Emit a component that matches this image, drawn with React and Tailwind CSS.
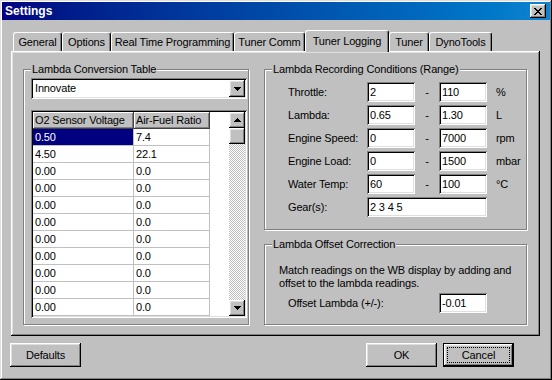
const raised =
  "shadow-[inset_-1px_-1px_#000,inset_1px_1px_#fff,inset_-2px_-2px_#808080,inset_2px_2px_#dfdfdf]";
const sunken =
  "shadow-[inset_1px_1px_#808080,inset_-1px_-1px_#fff,inset_2px_2px_#000,inset_-2px_-2px_#dfdfdf]";
const etched = "border border-[#808080] shadow-[inset_1px_1px_#fff,1px_1px_#fff]";

const tabs = [
  { label: "General", w: "w-[49px]" },
  { label: "Options", w: "w-[49px]" },
  { label: "Real Time Programming", w: "w-[123px]" },
  { label: "Tuner Comm", w: "w-[71px]" },
  { label: "Tuner Logging", w: "w-[84px]", active: true },
  { label: "Tuner", w: "w-[40px]" },
  { label: "DynoTools", w: "w-[63px]" },
];

const rows = [
  ["0.50", "7.4"],
  ["4.50", "22.1"],
  ...Array.from({ length: 9 }, () => ["0.00", "0.0"]),
];

const ranges = [
  { label: "Throttle:", min: "2", max: "110", unit: "%" },
  { label: "Lambda:", min: "0.65", max: "1.30", unit: "L" },
  { label: "Engine Speed:", min: "0", max: "7000", unit: "rpm" },
  { label: "Engine Load:", min: "0", max: "1500", unit: "mbar" },
  { label: "Water Temp:", min: "60", max: "100", unit: "°C" },
];

function Arrow({ up }) {
  return (
    <svg width="7" height="4" viewBox="0 0 7 4" shapeRendering="crispEdges" className={up ? "rotate-180" : ""}>
      <path d="M0 0H7V1H6V2H5V3H4V4H3V3H2V2H1V1H0Z" fill="#000" />
    </svg>
  );
}

function Field({ value, className = "" }) {
  return (
    <div className={`flex h-[20px] items-center bg-white pl-[3px] ${sunken} ${className}`}>
      {value}
    </div>
  );
}

function Group({ label, className = "", children }) {
  return (
    <div className={`relative ${etched} ${className}`}>
      <span className="absolute left-[7px] top-[-7px] bg-[#c0c0c0] px-[1px] leading-[13px]">
        {label}
      </span>
      {children}
    </div>
  );
}

function Button({ children, isDefault }) {
  if (isDefault) {
    return (
      <div className="h-[24px] w-[71px] border border-black">
        <div className={`h-full w-full p-[3px] ${raised}`}>
          <div className="flex h-full w-full items-center justify-center border border-dotted border-black">
            {children}
          </div>
        </div>
      </div>
    );
  }
  return (
    <div className={`flex h-[24px] w-[71px] items-center justify-center ${raised}`}>
      {children}
    </div>
  );
}

export default function App() {
  return (
    <div
      className={`flex h-[380px] w-[552px] flex-col bg-[#c0c0c0] p-[2px] font-['Liberation_Sans',Arial,sans-serif] text-[11px] leading-[13px] tracking-[-0.15px] text-black shadow-[inset_-1px_-1px_#000,inset_1px_1px_#dfdfdf,inset_-2px_-2px_#808080,inset_2px_2px_#fff]`}
    >
      {/* title bar */}
      <div className="flex h-[18px] items-center bg-linear-to-r from-[#000080] to-[#1084d0] pl-[3px] pr-[4px]">
        <span className="text-[12px] font-bold tracking-normal text-white">Settings</span>
        <div className={`ml-auto flex h-[14px] w-[16px] items-center justify-center bg-[#c0c0c0] ${raised}`}>
          <svg width="8" height="7" viewBox="0 0 8 7" shapeRendering="crispEdges">
            <path
              d="M0 0H2V1H3V2H5V1H6V0H8V1H7V2H6V3H5V4H6V5H7V6H8V7H6V6H5V5H3V6H2V7H0V6H1V5H2V4H3V3H2V2H1V1H0Z"
              fill="#000"
            />
          </svg>
        </div>
      </div>

      {/* tabs + panel */}
      <div className="ml-[9px] mt-[10px] w-[529px]">
        <div className="relative z-10 flex h-[21px] items-end pl-[2px]">
          {tabs.map((t) => (
            <div
              key={t.label}
              className={`${t.w} flex items-center justify-center rounded-t-[3px] border-l border-r border-t border-l-white border-r-black border-t-white bg-[#c0c0c0] shadow-[inset_-1px_0_#808080] ${
                t.active ? "-mb-px h-[22px]" : "h-[19px]"
              }`}
            >
              {t.label}
            </div>
          ))}
        </div>

        <div className={`flex h-[285px] gap-[15px] pl-[12px] pt-[18px] ${raised}`}>
          {/* lambda conversion table */}
          <Group label="Lambda Conversion Table" className="h-[256px] w-[226px] shrink-0">
            <div className="pl-[7px] pt-[8px]">
              <div className={`flex h-[21px] w-[216px] items-center bg-white p-[2px] ${sunken}`}>
                <span className="pl-[2px]">Innovate</span>
                <div className={`ml-auto flex h-[17px] w-[16px] items-center justify-center bg-[#c0c0c0] ${raised}`}>
                  <Arrow />
                </div>
              </div>

              <div className={`mt-[11px] flex h-[208px] w-[216px] bg-white p-[2px] ${sunken}`}>
                <div className="h-full w-[196px] overflow-hidden">
                  <div className="flex h-[17px]">
                    <div className="flex w-[101px] items-center bg-[#c0c0c0] pl-[2px] shadow-[inset_-1px_-1px_#404040,inset_1px_1px_#fff,inset_-2px_-2px_#808080]">
                      O2 Sensor Voltage
                    </div>
                    <div className="flex w-[76px] items-center bg-[#c0c0c0] pl-[2px] shadow-[inset_-1px_-1px_#404040,inset_1px_1px_#fff,inset_-2px_-2px_#808080]">
                      Air-Fuel Ratio
                    </div>
                  </div>
                  {rows.map(([v, r], i) => (
                    <div key={i} className="flex h-[17px]">
                      <div className="w-[101px] border-b border-r border-[#c0c0c0]">
                        <div
                          className={`flex h-full items-center pl-[2px] ${
                            i === 0 ? "bg-[#000080] text-white" : ""
                          }`}
                        >
                          {v}
                        </div>
                      </div>
                      <div className="flex w-[76px] items-center border-b border-r border-[#c0c0c0] pl-[2px]">
                        {r}
                      </div>
                    </div>
                  ))}
                </div>
                <div className="flex w-[16px] flex-col">
                  <div className={`flex h-[16px] items-center justify-center bg-[#c0c0c0] ${raised}`}>
                    <Arrow up />
                  </div>
                  <div className={`h-[16px] bg-[#c0c0c0] ${raised}`} />
                  <div className="flex-1 bg-[repeating-conic-gradient(#c0c0c0_0%_25%,#fff_0%_50%)] bg-[length:2px_2px]" />
                  <div className={`flex h-[16px] items-center justify-center bg-[#c0c0c0] ${raised}`}>
                    <Arrow />
                  </div>
                </div>
              </div>
            </div>
          </Group>

          <div className="flex w-[263px] flex-col gap-[14px]">
            <Group label="Lambda Recording Conditions (Range)" className="h-[161px]">
              <div className="flex flex-col gap-[3px] pl-[23px] pt-[12px]">
                {ranges.map((r) => (
                  <div key={r.label} className="flex h-[20px] items-center">
                    <span className="w-[79px]">{r.label}</span>
                    <Field value={r.min} className="w-[48px]" />
                    <span className="w-[24px] text-center">-</span>
                    <Field value={r.max} className="w-[48px]" />
                    <span className="ml-[9px]">{r.unit}</span>
                  </div>
                ))}
                <div className="flex h-[20px] items-center">
                  <span className="w-[79px]">Gear(s):</span>
                  <Field value="2 3 4 5" className="w-[120px]" />
                </div>
              </div>
            </Group>

            <Group label="Lambda Offset Correction" className="h-[81px]">
              <div className="pl-[14px] pt-[19px]">
                <p>
                  Match readings on the WB display by adding and
                  <br />
                  offset to the lambda readings.
                </p>
                <div className="mt-[3px] flex h-[20px] items-center pl-[9px]">
                  <span className="w-[151px]">Offset Lambda (+/-):</span>
                  <Field value="-0.01" className="w-[48px]" />
                </div>
              </div>
            </Group>
          </div>
        </div>
      </div>

      {/* buttons */}
      <div className="mt-[7px] flex pl-[8px] pr-[36px]">
        <Button>Defaults</Button>
        <div className="ml-auto flex gap-[6px]">
          <Button>OK</Button>
          <Button isDefault>Cancel</Button>
        </div>
      </div>
    </div>
  );
}
